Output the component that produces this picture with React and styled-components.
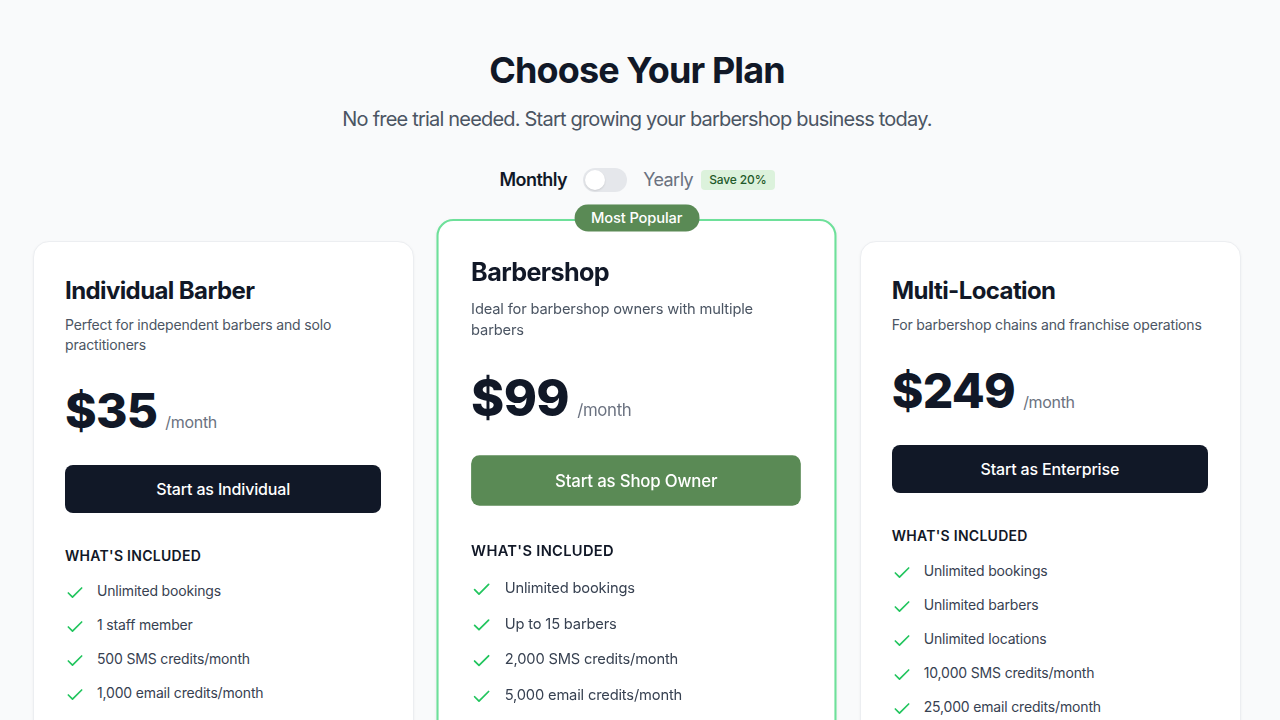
import { useState } from 'react';
import styled, { createGlobalStyle } from 'styled-components';
import { Check } from 'lucide-react';

const GlobalStyle = createGlobalStyle`
  * {
    box-sizing: border-box;
  }

  html, body {
    margin: 0;
    padding: 0;
    background: #f9fafb;
    font-family: Inter, "Noto Sans", "Liberation Sans", sans-serif;
    color: #111827;
  }

  ::-webkit-scrollbar {
    width: 6px;
  }

  ::-webkit-scrollbar-track {
    background: #f1f1f1;
  }

  ::-webkit-scrollbar-thumb {
    background: #c1c1c1;
  }
`;

const Page = styled.div`
  min-height: 100vh;
  padding: 50px 22px 96px 16px;
`;

const Header = styled.header`
  display: flex;
  flex-direction: column;
  align-items: center;
  text-align: center;
`;

const Title = styled.h1`
  margin: 0;
  font-size: 36px;
  line-height: 40px;
  font-weight: 700;
  color: #111827;
  letter-spacing: -0.025em;
`;

const Subtitle = styled.p`
  margin: 15px 0 0;
  font-size: 20px;
  line-height: 28px;
  color: #4b5563;
  letter-spacing: -0.04em;
`;

const ToggleRow = styled.div`
  display: flex;
  align-items: center;
  justify-content: center;
  gap: 16px;
  margin-top: 33px;
`;

const ToggleLabel = styled.span`
  font-size: 18px;
  line-height: 28px;
  letter-spacing: -0.03em;
  font-weight: ${({ $active }) => ($active ? 600 : 400)};
  color: ${({ $active }) => ($active ? '#111827' : '#6b7280')};
`;

const Switch = styled.button`
  position: relative;
  width: 44px;
  height: 24px;
  border: none;
  border-radius: 999px;
  padding: 0;
  background: ${({ $on }) => ($on ? '#5a8a55' : '#e5e7eb')};
  cursor: pointer;

  &::after {
    content: '';
    position: absolute;
    top: 2px;
    left: ${({ $on }) => ($on ? '22px' : '2px')};
    width: 20px;
    height: 20px;
    border-radius: 50%;
    background: #ffffff;
    box-shadow: 0 1px 2px rgba(0, 0, 0, 0.12);
    transition: left 0.2s;
  }
`;

const YearlyWrap = styled.span`
  display: flex;
  align-items: center;
  gap: 8px;
`;

const SaveBadge = styled.span`
  background: #dcf2dc;
  color: #1f5a2a;
  font-size: 12px;
  line-height: 16px;
  font-weight: 500;
  letter-spacing: -0.01em;
  padding: 2px 8px;
  border-radius: 4px;
`;

const Grid = styled.div`
  display: grid;
  grid-template-columns: repeat(3, 1fr);
  gap: 32px;
  max-width: 1208px;
  margin: 47px auto 0;
`;

const Card = styled.div`
  position: relative;
  min-height: 880px;
  background: #ffffff;
  border-radius: 16px;
  padding: 33px 32px 32px 31px;
  border: ${({ $featured }) => ($featured ? '2px solid #6ee09a' : '1px solid #eceef1')};
  box-shadow: 0 1px 3px rgba(17, 24, 39, 0.05);
  transform: ${({ $featured }) => ($featured ? 'scale(1.05)' : 'none')};
`;

const PopularBadge = styled.div`
  position: absolute;
  top: -16px;
  left: 50%;
  transform: translateX(-50%);
  background: #5a8a55;
  color: #ffffff;
  font-size: 14px;
  line-height: 18px;
  font-weight: 500;
  letter-spacing: -0.01em;
  padding: 4px 16px;
  border-radius: 999px;
  white-space: nowrap;
`;

const PlanName = styled.h2`
  margin: 0;
  font-size: 24px;
  line-height: 32px;
  font-weight: 700;
  letter-spacing: -0.025em;
  color: #111827;
`;

const PlanDesc = styled.p`
  margin: 8px 0 0;
  font-size: 14px;
  line-height: 20px;
  letter-spacing: -0.012em;
  color: #4b5563;
`;

const PriceRow = styled.div`
  display: flex;
  align-items: baseline;
  gap: 8px;
  margin-top: 32px;
`;

const Price = styled.span`
  font-size: 48px;
  line-height: 48px;
  font-weight: 800;
  color: #111827;
  letter-spacing: -0.015em;
`;

const Period = styled.span`
  font-size: 16px;
  line-height: 24px;
  letter-spacing: -0.02em;
  color: #6b7280;
`;

const CtaButton = styled.button`
  display: block;
  width: 100%;
  height: 48px;
  margin-top: 30px;
  border: none;
  border-radius: 8px;
  background: ${({ $featured }) => ($featured ? '#5a8a55' : '#111827')};
  color: #ffffff;
  font-family: inherit;
  font-size: 16px;
  font-weight: 500;
  letter-spacing: -0.01em;
  cursor: pointer;

  &:hover {
    opacity: 0.92;
  }
`;

const IncludedTitle = styled.h3`
  margin: 33px 0 0;
  font-size: 14px;
  line-height: 20px;
  font-weight: 600;
  letter-spacing: 0.02em;
  text-transform: uppercase;
  color: #111827;
`;

const FeatureList = styled.ul`
  list-style: none;
  margin: 15px 0 0;
  padding: 0;
  display: flex;
  flex-direction: column;
  gap: 12px;
`;

const FeatureItem = styled.li`
  display: flex;
  align-items: flex-start;
  gap: 12px;
  font-size: 14px;
  line-height: 20px;
  letter-spacing: -0.012em;
  color: #374151;

  svg {
    flex-shrink: 0;
    margin-top: 2px;
    color: #22c55e;
  }
`;

const Faq = styled.section`
  max-width: 768px;
  margin: 120px auto 0;
`;

const FaqTitle = styled.h2`
  margin: 0 0 32px;
  text-align: center;
  font-size: 30px;
  line-height: 36px;
  font-weight: 700;
`;

const FaqItem = styled.div`
  background: #ffffff;
  border: 1px solid #eceef1;
  border-radius: 12px;
  padding: 24px;
  margin-bottom: 16px;
`;

const FaqQuestion = styled.h4`
  margin: 0 0 8px;
  font-size: 16px;
  font-weight: 600;
`;

const FaqAnswer = styled.p`
  margin: 0;
  font-size: 14px;
  line-height: 22px;
  color: #4b5563;
`;

const plans = [
  {
    name: 'Individual Barber',
    desc: 'Perfect for independent barbers and solo practitioners',
    price: 35,
    cta: 'Start as Individual',
    features: [
      'Unlimited bookings',
      '1 staff member',
      '500 SMS credits/month',
      '1,000 email credits/month',
      'Online booking page',
      'Automated reminders',
      'Client management',
      'Basic analytics',
      'Email support',
    ],
  },
  {
    name: 'Barbershop',
    desc: 'Ideal for barbershop owners with multiple barbers',
    price: 99,
    cta: 'Start as Shop Owner',
    featured: true,
    features: [
      'Unlimited bookings',
      'Up to 15 barbers',
      '2,000 SMS credits/month',
      '5,000 email credits/month',
      'Everything in Individual',
      'Staff scheduling',
      'Commission tracking',
      'Advanced analytics',
      'Inventory management',
      'Priority support',
    ],
  },
  {
    name: 'Multi-Location',
    desc: 'For barbershop chains and franchise operations',
    price: 249,
    cta: 'Start as Enterprise',
    features: [
      'Unlimited bookings',
      'Unlimited barbers',
      'Unlimited locations',
      '10,000 SMS credits/month',
      '25,000 email credits/month',
      'Everything in Barbershop',
      'Multi-location dashboard',
      'Centralized reporting',
      'Custom branding',
      'API access',
      'Dedicated account manager',
      '24/7 phone support',
    ],
  },
];

const faqs = [
  ['Do I need a credit card to sign up?', 'Yes. There is no free trial, so your subscription starts as soon as you create your account.'],
  ['Can I switch plans later?', 'You can upgrade or downgrade at any time. Changes are prorated on your next invoice.'],
  ['What happens if I run out of SMS credits?', 'You can buy extra credit packs from your dashboard, or upgrade to a plan with more credits.'],
  ['Is there a contract?', 'No long-term contract. Monthly plans can be cancelled any time; yearly plans renew once a year.'],
  ['Can my clients book online?', 'Every plan includes a booking page your clients can use from any phone or computer.'],
  ['Do you offer support?', 'All plans include email support. Barbershop and Multi-Location plans get priority help.'],
];

const PlanCard = ({ plan, yearly }) => {
  const price = yearly ? Math.round(plan.price * 0.8) : plan.price;

  return (
    <Card $featured={plan.featured}>
      {plan.featured && <PopularBadge>Most Popular</PopularBadge>}
      <PlanName>{plan.name}</PlanName>
      <PlanDesc>{plan.desc}</PlanDesc>
      <PriceRow>
        <Price>${price}</Price>
        <Period>/month</Period>
      </PriceRow>
      <CtaButton $featured={plan.featured}>{plan.cta}</CtaButton>
      <IncludedTitle>What's included</IncludedTitle>
      <FeatureList>
        {plan.features.map((f) => (
          <FeatureItem key={f}>
            <Check size={20} strokeWidth={2} />
            <span>{f}</span>
          </FeatureItem>
        ))}
      </FeatureList>
    </Card>
  );
};

const App = () => {
  const [yearly, setYearly] = useState(false);

  return (
    <>
      <GlobalStyle />
      <Page>
        <Header>
          <Title>Choose Your Plan</Title>
          <Subtitle>No free trial needed. Start growing your barbershop business today.</Subtitle>
          <ToggleRow>
            <ToggleLabel $active={!yearly}>Monthly</ToggleLabel>
            <Switch $on={yearly} onClick={() => setYearly((v) => !v)} aria-label="Toggle billing period" />
            <YearlyWrap>
              <ToggleLabel $active={yearly}>Yearly</ToggleLabel>
              <SaveBadge>Save 20%</SaveBadge>
            </YearlyWrap>
          </ToggleRow>
        </Header>
        <Grid>
          {plans.map((p) => (
            <PlanCard key={p.name} plan={p} yearly={yearly} />
          ))}
        </Grid>
        <Faq>
          <FaqTitle>Frequently Asked Questions</FaqTitle>
          {faqs.map(([q, a]) => (
            <FaqItem key={q}>
              <FaqQuestion>{q}</FaqQuestion>
              <FaqAnswer>{a}</FaqAnswer>
            </FaqItem>
          ))}
        </Faq>
      </Page>
    </>
  );
};

export default App;
